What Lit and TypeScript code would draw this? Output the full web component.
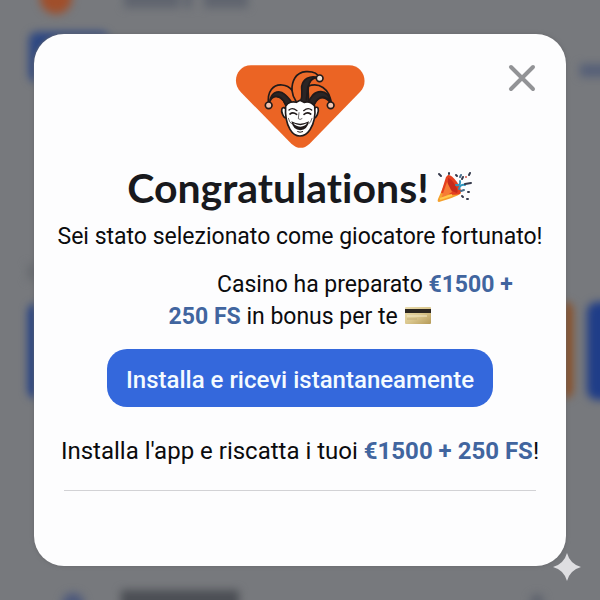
import { LitElement, html, css, svg } from "lit";
import { customElement } from "lit/decorators.js";

const jesterLogo = html`
  <svg class="logo" viewBox="30 28 390 249" role="img" aria-label="Casino">
    <path fill="#eb6424" d="M78 29H372C414 29 434 79 405 109L254 264Q227 289 199 264L47 109C18 79 36 29 78 29Z" />
    <g stroke="#211a1a" stroke-width="5" stroke-linejoin="round" stroke-linecap="round">
      <path fill="#ee6b29" d="M131 146C125 107 145 86 171 88C187 89 195 96 201 104C200 78 211 50 243 48C265 47 279 55 282 66C262 61 252 75 249 92C279 80 315 95 319 147C309 127 291 121 280 130C270 137 265 150 263 162L187 164C182 138 171 124 156 122C143 121 135 132 131 146Z" />
      <path fill="#2b2525" d="M135 132C143 105 166 104 179 116C193 128 202 143 204 148L187 164C181 139 170 123 154 122C145 121 139 125 135 132Z" />
      <path fill="#2b2525" d="M276 65C255 59 234 70 230 92C229 108 235 119 226 139L249 150C255 129 247 114 250 95C252 79 260 67 276 65Z" />
      <path fill="#2b2525" d="M249 147C254 124 269 107 288 108C304 109 314 124 318 138C306 123 290 120 279 130C270 138 266 149 263 163Z" />
      <path fill="none" d="M201 104C202 115 207 128 213 137M249 92C247 108 246 121 244 132" />
      <path fill="#fff" d="M181 158C170 151 167 164 173 177C176 184 181 187 184 186M269 157C280 149 283 163 277 177C274 184 269 187 266 186" />
      <path fill="#fff" d="M182 151C189 140 203 136 214 140L225 134L237 140C250 136 262 142 269 151C272 178 267 204 255 222C247 234 235 241 225 241C214 241 202 233 195 221C184 202 180 177 182 151Z" />
      <circle cx="131" cy="149" r="10" fill="#f2c5b0" />
      <circle cx="284" cy="68" r="10" fill="#f2ded0" />
      <circle cx="317" cy="149" r="10" fill="#f2c5b0" />
    </g>
    <g fill="none" stroke="#211a1a" stroke-width="4" stroke-linecap="round">
      <path d="M192 163Q202 154 216 165M236 165Q249 154 260 163" />
      <path d="M195 175Q204 168 215 176M237 176Q247 168 257 175" stroke-width="5" />
      <path d="M222 171L220 189Q225 194 231 189M190 188Q193 200 200 205M261 188Q258 200 251 205" stroke-width="2" />
      <path d="M218 228Q225 232 233 228" stroke-width="3" />
    </g>
    <path fill="#211a1a" d="M199 197Q225 211 252 197Q247 223 226 224Q204 223 199 197Z" />
    <path fill="#fff" d="M205 203Q226 214 246 203Q242 212 226 213Q210 212 205 203Z" />
  </svg>
`;

const partyPopper = html`
  <svg class="popper" viewBox="0 0 36 34" aria-hidden="true">
    <path fill="#f5a02c" d="M11 5L24 22Q22 25 2 31Q0 31 1 28Z" />
    <path fill="#e5401f" d="M11 4Q14 3 20 11Q26 20 23 23Q19 25 4 22L9 6Z" />
    <path fill="#c62b1b" d="M11 7Q15 8 18 14Q22 20 20 22Q13 20 11 15Z" />
    <path fill="#f77b35" d="M10 11L15 21L4 28Z" />
    <path fill="none" stroke="#ffc84b" stroke-width="2" d="M3 28L15 24" />
    <path fill="none" stroke="#3295bd" stroke-width="2" stroke-linecap="round" d="M19 14Q24 15 23 10M22 18Q23 13 28 14" />
    <g stroke="#34384a" stroke-width="2" stroke-linecap="round">
      <path d="M2 3L4 5M19 4L20 5M26 6L25 8M33 2L32 4M28 13L34 12" />
      <path stroke="#4b718e" d="M24 4L23 6M24 20L27 19" />
      <path d="M25 25L26 26M30 28L31 28M31 21L32 21M12 2V3" />
    </g>
    <circle cx="29" cy="6" r="1" fill="#d75b50" />
  </svg>
`;

const creditCard = html`
  <svg class="card-icon" viewBox="0 0 26 17" role="img" aria-label="Carta di credito">
    <defs>
      <linearGradient id="gold" x1="0" y1="0" x2="1" y2="1">
        <stop offset="0" stop-color="#eadcae" />
        <stop offset=".5" stop-color="#dbc88f" />
        <stop offset="1" stop-color="#b59a58" />
      </linearGradient>
    </defs>
    <rect width="26" height="17" rx="1" fill="url(#gold)" />
    <rect y="2" width="26" height="4" fill="#2c2720" />
    <path stroke="#f3e9c8" d="M2 9H22" />
    <path stroke="#c4ae78" d="M2 12H12" />
  </svg>
`;

const lobbyShapes = svg`
  <rect width="600" height="600" fill="#77797d" />
  <g class="soft">
    <circle cx="56" cy="-2" r="16" fill="#a04f2b" />
    <rect x="124" y="-10" width="56" height="18" fill="#60656f" />
    <rect x="184" y="-10" width="8" height="18" fill="#60656f" />
    <rect x="204" y="-10" width="44" height="18" fill="#60656f" />
    <rect x="29" y="32" width="80" height="50" rx="8" fill="#2d4783" />
    <rect x="580" y="64" width="40" height="13" fill="#566078" />
    <rect x="27" y="264" width="20" height="16" fill="#6a6d72" />
    <rect x="28" y="304" width="80" height="94" rx="8" fill="#213f86" />
    <rect x="480" y="302" width="93" height="96" rx="8" fill="#8b5128" />
    <rect x="587" y="302" width="60" height="98" rx="10" fill="#1f3d88" />
    <circle cx="73" cy="604" r="11" fill="#4d597c" />
    <rect x="121" y="590" width="118" height="20" fill="#4c4f55" />
    <circle cx="537" cy="601" r="7" fill="#5e636e" />
  </g>
`;

@customElement("app-root")
export class AppRoot extends LitElement {
  static styles = css`
    :host {
      display: block;
      font-family: Roboto, "Liberation Sans", sans-serif;
      color: #0b0b0d;
    }
    * {
      box-sizing: border-box;
    }
    .stage {
      position: relative;
      min-height: 100vh;
      display: grid;
      grid-template-columns: minmax(0, 1fr);
      align-content: start;
      padding: 34px;
      overflow: hidden;
      background: #77797d;
    }
    .lobby {
      position: absolute;
      inset: 0;
      width: 100%;
      height: 100%;
    }
    .soft {
      filter: blur(4px);
    }
    .dialog {
      position: relative;
      display: flex;
      flex-direction: column;
      align-items: center;
      width: 100%;
      max-width: 640px;
      margin: 0 auto;
      padding: 31px 20px 75px;
      border-radius: 30px;
      background: #fdfdfe;
      box-shadow: 0 0 4px #66676b;
      text-align: center;
      font-size: 23px;
      line-height: 32px;
    }
    .close {
      position: absolute;
      top: 24px;
      right: 24px;
      width: 40px;
      height: 40px;
      padding: 6px;
      border: 0;
      background: none;
      cursor: pointer;
    }
    .close svg {
      display: block;
      width: 28px;
      height: 28px;
    }
    .logo {
      display: block;
      width: 130px;
      height: 83px;
    }
    h1 {
      display: flex;
      align-items: center;
      justify-content: center;
      gap: 8px;
      margin: 16px 0 9px;
      font-family: Lato, "Open Sans", sans-serif;
      font-size: 41px;
      line-height: 48px;
      font-weight: 700;
      font-variant-ligatures: none;
      color: #18191d;
      white-space: nowrap;
    }
    .popper {
      width: 36px;
      height: 34px;
    }
    p {
      margin: 0;
    }
    .lead,
    .claim {
      white-space: nowrap;
    }
    .offer {
      max-width: 448px;
      margin: 16px 0;
    }
    .brand {
      display: inline-block;
      width: 124px;
    }
    strong {
      font-weight: 700;
      color: #41659f;
      white-space: nowrap;
    }
    .card-icon {
      width: 26px;
      height: 17px;
      margin-left: 2px;
    }
    .install {
      padding: 15px 19px 11px;
      border: 0;
      border-radius: 20px;
      background: #3468dc;
      color: #f4fbff;
      font: 500 24px/32px Roboto, "Liberation Sans", sans-serif;
      white-space: nowrap;
      cursor: pointer;
    }
    .claim {
      margin: 28px 0 23px;
      font-size: 24px;
    }
    hr {
      width: 100%;
      max-width: 472px;
      margin: 0;
      border: 0;
      border-top: 1px solid #d2d2d5;
    }
    .spark {
      position: absolute;
      right: -15px;
      bottom: -15px;
      width: 28px;
      height: 28px;
    }
  `;

  render() {
    return html`
      <main class="stage">
        <svg class="lobby" viewBox="0 0 600 600" preserveAspectRatio="xMidYMid slice" aria-hidden="true">
          ${lobbyShapes}
        </svg>
        <section class="dialog" role="dialog" aria-labelledby="title">
          <button class="close" type="button" aria-label="Chiudi">
            <svg viewBox="0 0 28 28" fill="none" stroke="#929396" stroke-width="4" stroke-linecap="round">
              <path d="M3 3L25 25M25 3L3 25" />
            </svg>
          </button>
          ${jesterLogo}
          <h1 id="title">Congratulations! ${partyPopper}</h1>
          <p class="lead">Sei stato selezionato come giocatore fortunato!</p>
          <p class="offer">
            <span class="brand"></span> Casino ha preparato
            <strong>€1500 +</strong> <strong>250 FS</strong> in bonus per te ${creditCard}
          </p>
          <button class="install" type="button">Installa e ricevi istantaneamente</button>
          <p class="claim">Installa l'app e riscatta i tuoi <strong>€1500 + 250 FS</strong>!</p>
          <hr />
          <svg class="spark" viewBox="0 0 28 28" aria-hidden="true">
            <path fill="#dedee1" d="M14 0Q17 11 28 14Q17 17 14 28Q11 17 0 14Q11 11 14 0Z" />
          </svg>
        </section>
      </main>
    `;
  }
}
